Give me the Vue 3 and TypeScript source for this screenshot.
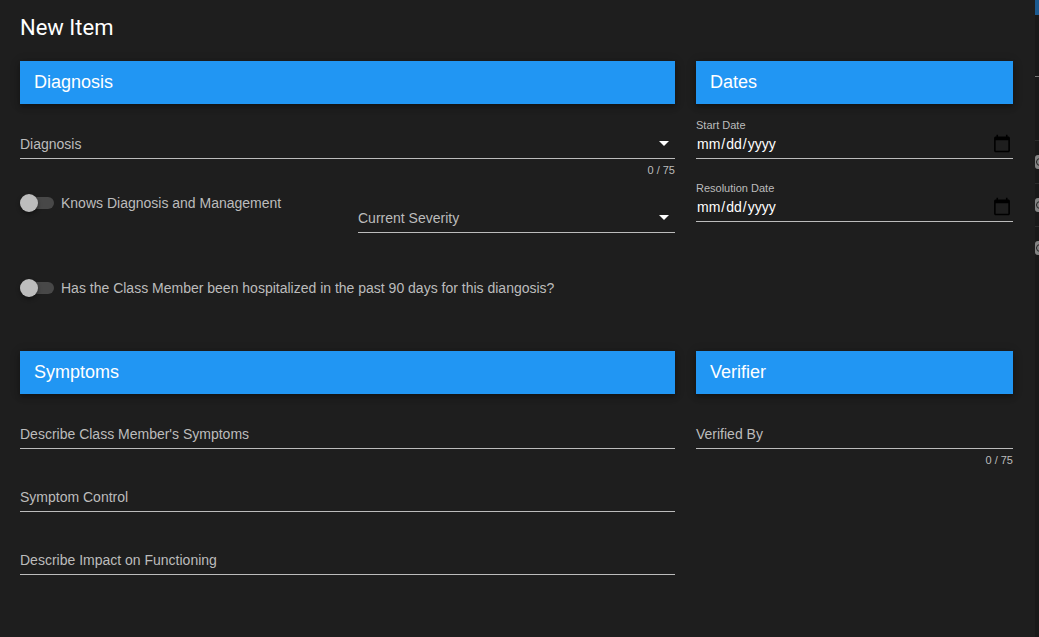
<script setup lang="ts">
import { reactive } from 'vue'

const form = reactive({
  diagnosis: '',
  knows: false,
  severity: '',
  hospitalized: false,
  startDate: '',
  resolutionDate: '',
  symptoms: '',
  control: '',
  impact: '',
  verifiedBy: '',
})

const diagnoses: string[] = ['Asthma', 'Diabetes', 'Hypertension']
const severities: string[] = ['Mild', 'Moderate', 'Severe']

const symptomFields: { key: 'symptoms' | 'control' | 'impact'; label: string }[] = [
  { key: 'symptoms', label: "Describe Class Member's Symptoms" },
  { key: 'control', label: 'Symptom Control' },
  { key: 'impact', label: 'Describe Impact on Functioning' },
]

const dateFields: { key: 'startDate' | 'resolutionDate'; label: string }[] = [
  { key: 'startDate', label: 'Start Date' },
  { key: 'resolutionDate', label: 'Resolution Date' },
]
</script>

<template>
  <div class="page">
    <main class="dialog">
      <h1>New Item</h1>
      <form class="sections" @submit.prevent>
        <section class="wide">
          <h2>Diagnosis</h2>
          <div class="field">
            <div class="control">
              <label for="diagnosis" :class="{ hidden: form.diagnosis }">Diagnosis</label>
              <select id="diagnosis" v-model="form.diagnosis">
                <option value=""></option>
                <option v-for="d in diagnoses" :key="d">{{ d }}</option>
              </select>
              <svg class="arrow" viewBox="0 0 24 24" aria-hidden="true"><path d="M7 10l5 5 5-5z" /></svg>
            </div>
            <div class="details">{{ form.diagnosis.length }} / 75</div>
          </div>
          <div class="split">
            <label class="switch">
              <input v-model="form.knows" type="checkbox" role="switch" />
              <span>Knows Diagnosis and Management</span>
            </label>
            <div class="field">
              <div class="control">
                <label for="severity" :class="{ hidden: form.severity }">Current Severity</label>
                <select id="severity" v-model="form.severity">
                  <option value=""></option>
                  <option v-for="s in severities" :key="s">{{ s }}</option>
                </select>
                <svg class="arrow" viewBox="0 0 24 24" aria-hidden="true"><path d="M7 10l5 5 5-5z" /></svg>
              </div>
              <div class="details"></div>
            </div>
          </div>
          <label class="switch last">
            <input v-model="form.hospitalized" type="checkbox" role="switch" />
            <span>Has the Class Member been hospitalized in the past 90 days for this diangosis?</span>
          </label>
        </section>

        <section>
          <h2>Dates</h2>
          <div v-for="f in dateFields" :key="f.key" class="field date">
            <label :for="f.key">{{ f.label }}</label>
            <input :id="f.key" v-model="form[f.key]" type="date" />
            <div class="details"></div>
          </div>
        </section>

        <section class="wide">
          <h2>Symptoms</h2>
          <div v-for="f in symptomFields" :key="f.key" class="field">
            <div class="control">
              <label :for="f.key" :class="{ hidden: form[f.key] }">{{ f.label }}</label>
              <input :id="f.key" v-model="form[f.key]" type="text" />
            </div>
            <div class="details"></div>
          </div>
        </section>

        <section>
          <h2>Verifier</h2>
          <div class="field">
            <div class="control">
              <label for="verifiedBy" :class="{ hidden: form.verifiedBy }">Verified By</label>
              <input id="verifiedBy" v-model="form.verifiedBy" type="text" maxlength="75" />
            </div>
            <div class="details">{{ form.verifiedBy.length }} / 75</div>
          </div>
        </section>
      </form>
    </main>
    <aside class="behind" aria-hidden="true">
      <div class="bar"></div>
      <div class="filter"></div>
      <div class="head"></div>
      <div v-for="n in 3" :key="n" class="row"><i></i></div>
    </aside>
  </div>
</template>

<style>
body {
  background: #1e1e1e;
}
</style>

<style scoped>
.page {
  display: flex;
  min-height: 100vh;
  background: #1e1e1e;
  color: #fff;
  font-family: 'Liberation Sans', Arial, sans-serif;
  font-size: 14px;
}
.dialog {
  flex: 1;
  min-width: 0;
  padding: 12px 22px 20px 20px;
}
h1 {
  margin: 0 0 17px;
  font: 400 22px/32px Roboto, sans-serif;
}
.sections {
  display: grid;
  grid-template-columns: repeat(3, minmax(0, 1fr));
  gap: 49px 21px;
}
.wide {
  grid-column: span 2;
}
h2 {
  margin: 0 0 11px;
  padding: 0 14px;
  background: #2196f3;
  font-size: 18px;
  line-height: 43px;
  font-weight: 400;
  box-shadow: 0 3px 5px rgba(0, 0, 0, 0.3), 0 1px 10px rgba(0, 0, 0, 0.15);
}
.field {
  padding-top: 12px;
}
.control {
  display: grid;
  align-items: center;
  height: 31px;
  border-bottom: 1px solid #bcbcbc;
}
.control > * {
  grid-area: 1 / 1;
}
.control label {
  padding-top: 2px;
  pointer-events: none;
  color: #bcbcbc;
}
.control label.hidden {
  visibility: hidden;
}
.control select,
.control input {
  width: 100%;
  height: 31px;
  box-sizing: border-box;
  padding: 0;
  border: 0;
  outline: 0;
  background: transparent;
  color: #fff;
  font: inherit;
  appearance: none;
}
.control option {
  color: #000;
}
.arrow {
  justify-self: end;
  width: 24px;
  height: 24px;
  margin-right: -1px;
  fill: #fff;
  pointer-events: none;
}
.details {
  height: 15px;
  padding-top: 4px;
  color: #bcbcbc;
  font-size: 11px;
  line-height: 14px;
  text-align: right;
}
.date {
  padding-top: 3px;
}
.date label {
  display: block;
  color: #bcbcbc;
  font-size: 11px;
  line-height: 14px;
}
.date input {
  display: block;
  width: 100%;
  height: 27px;
  box-sizing: border-box;
  padding: 0 0 2px;
  border: 0;
  border-bottom: 1px solid #bcbcbc;
  outline: 0;
  background: transparent;
  color: #fff;
  font: inherit;
}
.date input::-webkit-calendar-picker-indicator {
  width: 20px;
  height: 20px;
  padding: 0;
  margin-right: 1px;
}
.split {
  display: grid;
  grid-template-columns: repeat(2, minmax(0, 1fr));
  gap: 21px;
  align-items: start;
  margin-top: 11px;
}
.split .field {
  min-width: 0;
}
.switch {
  display: flex;
  align-items: center;
  gap: 7px;
  height: 28px;
  color: #bcbcbc;
}
.switch.last {
  margin-top: 22px;
}
.switch input {
  appearance: none;
  display: flex;
  align-items: center;
  flex: none;
  width: 34px;
  height: 12px;
  margin: 0;
  border-radius: 6px;
  background: #484848;
}
.switch input::before {
  content: '';
  width: 18px;
  height: 18px;
  border-radius: 50%;
  background: #bdbdbd;
  box-shadow: 0 2px 4px rgba(0, 0, 0, 0.4);
}
.switch input:checked {
  justify-content: flex-end;
}
.behind {
  width: 4px;
  overflow: hidden;
  background: #191919;
}
.bar {
  height: 15px;
  background: #1c5a90;
}
.filter {
  height: 61px;
  border-bottom: 1px solid #777;
}
.head {
  height: 63px;
  border-bottom: 1px solid #2c2c2c;
}
.row {
  display: flex;
  align-items: center;
  height: 42px;
  border-bottom: 1px solid #2c2c2c;
}
.row:last-child {
  border-bottom: 0;
}
.row i {
  display: flex;
  align-items: center;
  flex: none;
  width: 14px;
  height: 14px;
  border-radius: 3px;
  background: #858585;
}
.row i::before {
  content: '';
  width: 8px;
  height: 8px;
  margin-left: 1px;
  box-sizing: border-box;
  border: 1px solid #1e1e1e;
  border-radius: 50%;
}
</style>
